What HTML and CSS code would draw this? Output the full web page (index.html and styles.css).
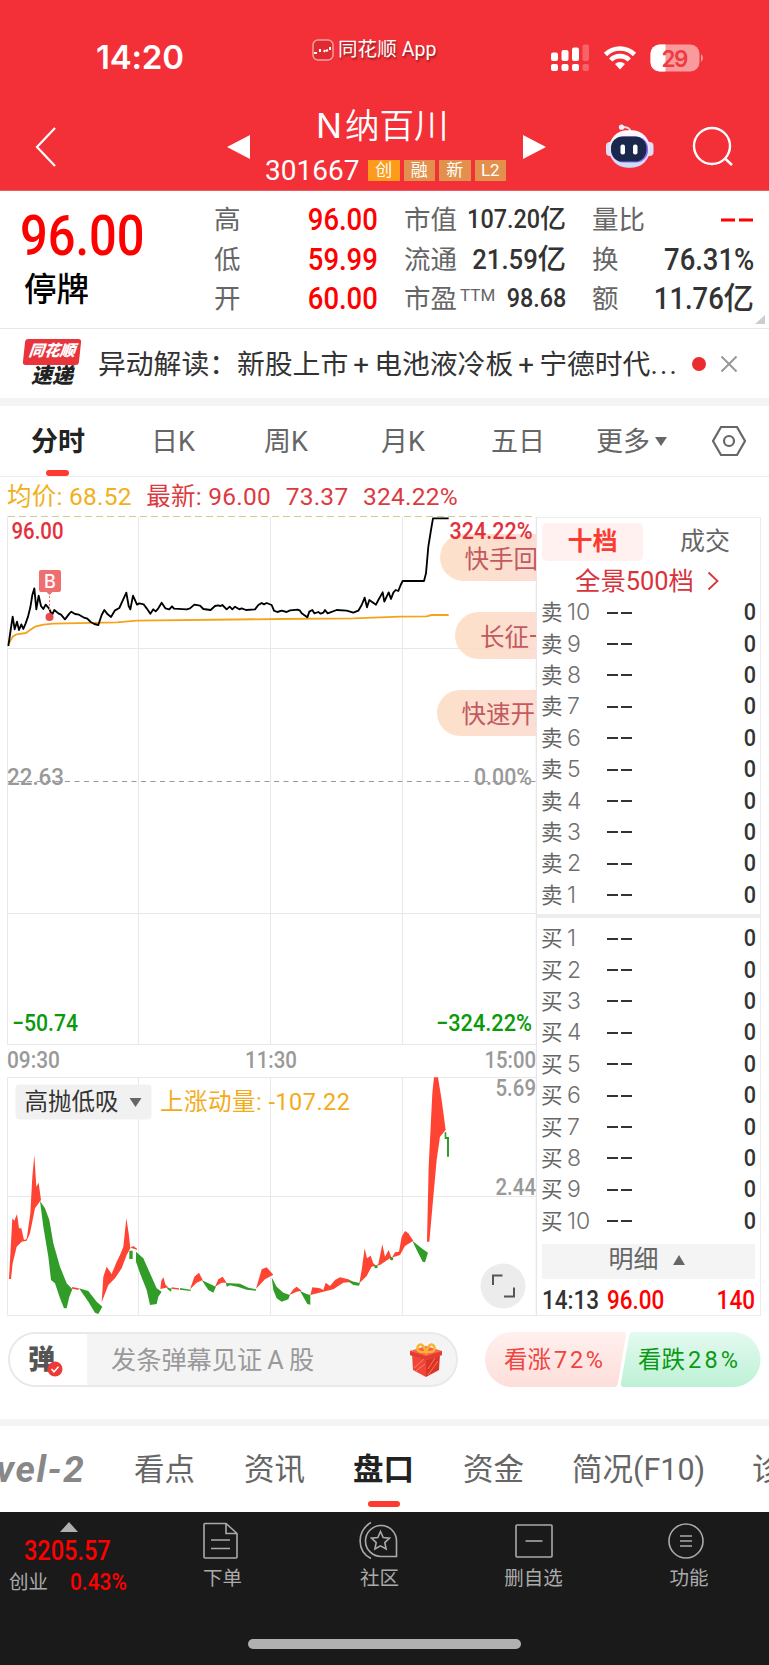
FILE: index.html
```html
<!DOCTYPE html>
<html lang="zh-CN">

<head>
  <meta charset="UTF-8">
  <title>N纳百川 301667</title>
  <link rel="stylesheet" href="styles.css">
</head>

<body>
  <header class="header">
    <div class="status-bar">
      <div class="clock">14:20</div>
      <div class="app-name">
        <svg width="22" height="22" viewBox="0 0 22 22">
          <rect x="1" y="1" width="20" height="20" rx="5" fill="#df2a31" stroke="#f5a0a0" stroke-width="1.500" />
          <path d="M2 14h3M8 10v3M12 13l1-2M14 12l2-1M18 8v3" stroke="#fff" stroke-width="2" fill="none" />
        </svg>
        <span>同花顺 App</span>
      </div>
      <svg class="status-icons" width="156" height="30" viewBox="0 0 156 30">
        <g fill="#fff">
          <rect x="2" y="21" width="7" height="7" rx="2" />
          <rect x="12.500" y="21" width="7" height="7" rx="2" />
          <rect x="23" y="21" width="7" height="7" rx="2" />
          <rect x="2" y="9.500" width="7" height="8.500" rx="2" />
          <rect x="12.500" y="7" width="7" height="11" rx="2" />
          <rect x="23" y="4.500" width="7" height="13.500" rx="2" />
          <g opacity=".25">
            <rect x="33.500" y="21" width="6.500" height="7" rx="2" />
            <rect x="33.500" y="1.500" width="6.500" height="16.500" rx="2" />
          </g>
        </g>
        <g fill="none" stroke="#fff" stroke-width="4.600">
          <path d="M56.500 11.500a20.500 20.500 0 0 1 29 0" />
          <path d="M61.700 17a13 13 0 0 1 18.600 0" />
        </g>
        <path d="M71 26.500l-5-5.500a7.500 7.500 0 0 1 10 0z" fill="#fff" />
        <rect x="101.500" y="1.500" width="49" height="27" rx="9" fill="#f99a9d" />
        <path d="M110.500 1.500h6v27h-6a9 9 0 0 1-9-9v-9a9 9 0 0 1 9-9z" fill="#fff" />
        <path d="M152 11q4 4 0 8z" fill="#f99a9d" />
        <text x="126" y="23.500" textLength="27" class="battery-text">29</text>
      </svg>
    </div>

    <div class="title-bar">
      <svg class="back" width="24" height="42" viewBox="0 0 24 42">
        <path d="M21 2L3 21l18 19" fill="none" stroke="#fff" stroke-width="2.200" />
      </svg>
      <svg class="prev" width="23" height="26" viewBox="0 0 23 26">
        <path d="M23 1v24L0 13z" fill="#fff" />
      </svg>
      <div class="title-box">
        <div class="stock-name">N<span>纳百川</span></div>
        <div class="stock-code">
          <span class="code">301667</span>
          <i class="badge badge-main">创</i><i class="badge">融</i><i class="badge">新</i><i class="badge">L2</i>
        </div>
      </div>
      <svg class="next" width="23" height="26" viewBox="0 0 23 26">
        <path d="M0 1v24l23-12z" fill="#fff" />
      </svg>
      <svg class="robot" width="50" height="46" viewBox="0 0 50 46">
        <defs>
          <linearGradient id="shell" x1="0" y1="0" x2="0" y2="1">
            <stop offset="0" stop-color="#fff" />
            <stop offset=".6" stop-color="#e4ddfb" />
            <stop offset="1" stop-color="#c8dcfa" />
          </linearGradient>
        </defs>
        <path d="M24 8V6q-1-3-8-3" fill="none" stroke="#e4e6f5" stroke-width="1.800" />
        <circle cx="15.500" cy="3.200" r="2.600" fill="#f0f0fa" />
        <rect x="0" y="18" width="8" height="14" rx="4" fill="#dbe0f7" />
        <rect x="39.500" y="18" width="8" height="14" rx="4" fill="#dbe0f7" />
        <rect x="3" y="6.200" width="41" height="37.500" rx="18.500" fill="url(#shell)" />
        <rect x="5.500" y="12.500" width="36.500" height="26" rx="12" fill="#8a6cf0" />
        <rect x="5" y="12.500" width="35.500" height="25" rx="11.500" fill="#1a294b" />
        <rect x="14.500" y="20.500" width="4.500" height="10" rx="2" fill="#fff" />
        <rect x="27" y="20.500" width="4.500" height="10" rx="2" fill="#fff" />
      </svg>
      <svg class="search" width="42" height="42" viewBox="0 0 42 42">
        <g fill="none" stroke="#fff" stroke-width="2.400">
          <circle cx="20" cy="20" r="18" />
          <path d="M33 32.500l7 6.500" />
        </g>
      </svg>
    </div>
  </header>

  <section class="quote">
    <div class="quote-main">
      <div class="price"><span class="num">96.00</span></div>
      <div class="state">停牌</div>
    </div>
    <div class="quote-grid">
      <span class="k">高</span><span class="v red"><b class="num">96.00</b></span>
      <span class="k">市值</span><span class="v small"><b class="num">107.20</b>亿</span>
      <span class="k">量比</span><span class="v red"><svg width="34" height="4"><path d="M1 2h14M19 2h14" stroke="#f00" stroke-width="3" /></svg></span>

      <span class="k">低</span><span class="v red"><b class="num">59.99</b></span>
      <span class="k">流通</span><span class="v mid"><b class="num">21.59</b>亿</span>
      <span class="k">换</span><span class="v"><b class="num">76.31%</b></span>

      <span class="k">开</span><span class="v red"><b class="num">60.00</b></span>
      <span class="k">市盈<sup>TTM</sup></span><span class="v small"><b class="num">98.68</b></span>
      <span class="k">额</span><span class="v"><b class="num">11.76</b>亿</span>
    </div>
    <i class="corner"></i>
  </section>

  <section class="news">
    <div class="news-logo">
      <div class="logo-top"><span>同花顺</span></div>
      <div class="logo-bottom">速递</div>
    </div>
    <div class="news-text">异动解读：新股上市<em>+</em>电池液冷板<em>+</em>宁德时代<b>...</b></div>
    <i class="news-dot"></i>
    <svg width="18" height="18" viewBox="0 0 18 18">
      <path d="M1.500 1.500l15 15M16.500 1.500l-15 15" stroke="#999" stroke-width="2" />
    </svg>
  </section>

  <nav class="chart-tabs">
    <span class="tab active">分时</span>
    <span class="tab">日K</span>
    <span class="tab">周K</span>
    <span class="tab">月K</span>
    <span class="tab">五日</span>
    <span class="tab more">更多<i></i></span>
    <svg width="34" height="32" viewBox="0 0 34 32">
      <g fill="none" stroke="#666" stroke-width="2.200">
        <path d="M9 2h16l8 14-8 14H9L1 16z" />
        <circle cx="17" cy="16" r="5" />
      </g>
    </svg>
  </nav>

  <div class="legend">
    <span class="avg">均价: 68.52</span>
    <span>最新: 96.00</span>
    <span>73.37</span>
    <span>324.22%</span>
  </div>

  <main class="market">
    <!-- price chart and indicator chart share one canvas -->
    <svg class="chart" width="537" height="806" viewBox="0 0 537 806">
      <defs>
        <clipPath id="plot"><rect x="8" y="0" width="528" height="806" /></clipPath>
        <linearGradient id="pill" x1="0" x2="1">
          <stop offset="0" stop-color="#fddcc2" />
          <stop offset="1" stop-color="#fbd8d2" />
        </linearGradient>
      </defs>

      <g class="grid-lines">
        <path d="M7.500 6.500V534.500H536.500M138.500 7V534M270.500 7V534M402.500 7V534M8 138.500H536M8 403.500H536" />
        <path d="M7.500 805.500V567.500H536M138.500 568V805M270.500 568V805M402.500 568V805M8 686.500H536M8 805.500H537" />
      </g>
      <path d="M536.500 7V806" stroke="#e6e6e6" stroke-width="1.500" />
      <path d="M8 6.500H536" stroke="#d9c98e" stroke-dasharray="7 4" />
      <path d="M8 271.500H536" stroke="#999" stroke-dasharray="5 4.500" />

      <text x="11.500" y="29" textLength="52" lengthAdjust="spacingAndGlyphs" class="axis up">96.00</text>
      <text x="7" y="275" textLength="57" lengthAdjust="spacingAndGlyphs" class="axis mute">22.63</text>
      <text x="474" y="275" textLength="58" lengthAdjust="spacingAndGlyphs" class="axis mute">0.00%</text>
      <text x="12" y="521" textLength="66" lengthAdjust="spacingAndGlyphs" class="axis down">−50.74</text>
      <text x="436" y="521" textLength="96" lengthAdjust="spacingAndGlyphs" class="axis down">−324.22%</text>
      <text x="7" y="558" textLength="53" lengthAdjust="spacingAndGlyphs" class="axis mute">09:30</text>
      <text x="245" y="558" textLength="52" lengthAdjust="spacingAndGlyphs" class="axis mute">11:30</text>
      <text x="484.500" y="558" textLength="51.500" lengthAdjust="spacingAndGlyphs" class="axis mute">15:00</text>

      <g clip-path="url(#plot)" class="barrage">
        <rect x="440" y="24" width="130" height="47" rx="23.500" />
        <rect x="455" y="102" width="130" height="47" rx="23.500" />
        <rect x="437" y="180" width="130" height="46" rx="23" />
        <text x="464.500" y="58">快手回</text>
        <text x="480" y="136">长征一</text>
        <text x="461.500" y="213">快速开户</text>
      </g>
      <text x="449.500" y="29" textLength="83" lengthAdjust="spacingAndGlyphs" class="axis up">324.22%</text>

      <g transform="translate(0 -10) scale(.33333)" fill="none" stroke-linejoin="round">
        <polyline stroke="#f5a31c" stroke-width="5.500" points="27,430 38,410 50,403 78,399 90,390 105,380 130,374 160,371 350,367 410,362 840,357 1060,355 1200,350 1280,349 1295,345 1346,345" />
        <polyline stroke="#000" stroke-width="5.500" points="25,438 32,390 38,350 44,388 51,365 57,390 64,373 70,387 77,370 84,350 91,322 97,285 103,265 109,328 116,287 123,318 130,327 137,314 147,325 156,345 163,330 175,340 183,344 195,358 208,341 214,335 225,342 237,344 250,352 262,356 272,366 283,372 295,375 305,345 313,330 323,343 333,351 345,331 358,324 368,302 379,278 386,318 391,328 399,287 411,314 418,310 431,313 440,325 451,341 460,328 467,334 475,325 485,308 496,325 508,328 516,319 522,326 560,328 570,325 583,314 600,317 610,327 632,330 645,318 654,316 662,318 667,315 680,328 689,320 697,328 705,320 718,328 725,325 738,330 765,328 775,315 785,309 792,313 800,309 815,315 822,332 832,336 845,332 860,336 870,331 893,329 900,332 905,340 922,352 928,335 937,330 943,340 955,336 962,341 970,338 975,330 983,340 1010,330 1040,332 1060,338 1075,332 1085,315 1094,293 1101,322 1108,300 1128,314 1135,300 1148,277 1153,305 1166,277 1173,297 1180,278 1187,270 1195,273 1202,255 1208,243 1272,243 1278,220 1285,140 1293,90 1299,55 1346,55" />
      </g>

      <g class="buy-mark">
        <path d="M41 60h18q2 0 2 2v18q0 2-2 2h-6.500l-3 3-3-3H41q-2 0-2-2V62q0-2 2-2z" />
        <path d="M49.500 86v18" stroke="#ef6e70" stroke-dasharray="2 2" />
        <circle cx="49.500" cy="107" r="4" fill="#e84a52" />
        <text x="50" y="77.500">B</text>
      </g>

      <g transform="translate(0 490) scale(.33333)">
        <g fill="#ff4433">
          <path d="M27 837L37 655l6 7 8-20 6 43h7l8 35 8-3 11-77 6-110 6-65 6 95 7-12 7 52-18 25-15 75-10 22-15 3-15 15-12 50-5 47z" />
          <path d="M216 861l20 4v5l-20-4z" />
          <path d="M305 907l5-77 10-30 15 22 15-37 10-20 10-25 9-85 7 45 5 45-11 20-15 40-20 30-20 20z" />
          <path d="M391 743l9-5 11 8v3z" />
          <path d="M481 867l3-25 6-10 7 23 8 7zM515 862l22 3v4l-22-3zM570 868l13-38 14-12 11 22-18 8zM645 860l10-22 13-8 12 18h-15zM768 866l17-58 15-6 20 22-25 14z" />
          <path d="M868 885l12-17 10-8 15 12-15 3zM931 885l6-23 23 3 10 5 7-22 13 10 15-18 15-8 25 6 15 7-30 3-30 20-30 7z" />
          <path d="M1078 850l7-40 9-65 7 30 11-8 8 23 8 7 7-5 12-59 8 37 11-20 9 25 10-18 12-2 8-45 10-17 10 7 15 22-25 16-15 27-30 10-30 20-25 5-15 28z" />
          <path d="M1281 725l5-225 6-120 5-100 5-48h12l11 68 12 90-17 20-10 70-10 110-12 135z" />
        </g>
        <g fill="#319d28">
          <path d="M120 603l15 22 13 35 12 70 20 70 20 50 17 18-9 22-8 35h-8l-12-30-15-45-12-10-8-70-15-90z" />
          <path d="M237 865l28 8 25 32 17 15-12 22-10-4-20-33z" />
          <path d="M388 752h10v25h-10zM408 755l22 20 20 45 20 45 15 10-10 15-5 22-20 3-10-45-20-50-12-35z" />
          <path d="M500 862l15 4-2 9-10-7zM540 864l32 5v4l-32-4zM605 840l20 10 23 10-8 18-15-8zM678 849l42 2 25 12 23 5v4l-28-3-25-8-25-5-10 4z" />
          <path d="M815 832l15 28 20 18 20 7-5 13-20 7-15-10-10-25zM900 873l20 9 11 3v29l-9-2zM1040 841l40 8-3 8-17-2z" />
          <circle cx="1128" cy="800" r="5" />
          <circle cx="1175" cy="776" r="5" />
          <path d="M1237 722l28 23 19 13-9 29-7-2-18-35zM1334 397h5v14h8v59h-6v-53h-7z" />
        </g>
      </g>

      <rect x="15.500" y="574.500" width="136" height="35" rx="4" fill="#f1f1f1" />
      <text x="24.500" y="600" class="selector">高抛低吸</text>
      <path d="M129.500 588h12l-6 9z" fill="#666" />
      <text x="160" y="600" textLength="190" class="momentum">上涨动量: -107.22</text>
      <text x="495.500" y="586" textLength="40.500" lengthAdjust="spacingAndGlyphs" class="axis mute">5.69</text>
      <text x="495.500" y="684.500" textLength="40.500" lengthAdjust="spacingAndGlyphs" class="axis mute">2.44</text>

      <circle cx="503" cy="776" r="22.500" fill="#ececec" />
      <path d="M493 775v-9.500h9.500M514 777.500v9h-10" fill="none" stroke="#555" stroke-width="2" />
    </svg>

    <aside class="book">
      <div class="book-tabs"><span class="on">十档</span><span>成交</span></div>
      <div class="book-link">全景500档
        <svg width="12" height="20" viewBox="0 0 12 20"><path d="M1.500 1.500l9 8.500-9 8.500" fill="none" stroke="#d9333a" stroke-width="1.800" /></svg>
      </div>
      <div class="levels" id="asks"></div>
      <div class="levels bids" id="bids"></div>
      <div class="detail"><span>明细</span><i></i></div>
      <div class="trade"><span class="num">14:13</span><span class="num red">96.00</span><span class="num red">140</span></div>
    </aside>
  </main>

  <section class="actions">
    <div class="danmu">
      <div class="danmu-switch"><span>弹</span>
        <svg width="16" height="16" viewBox="0 0 16 16">
          <circle cx="8" cy="8" r="7.500" fill="#ee3a36" />
          <path d="M4.500 8l2.500 2.800 4.500-5" fill="none" stroke="#fff" stroke-width="1.500" />
        </svg>
      </div>
      <span class="danmu-hint">发条弹幕见证 A 股</span>
      <svg width="34" height="36" viewBox="0 0 34 36">
        <path d="M3 12l14 5v18L4 28z" fill="#f0463a" />
        <path d="M31 12l-14 5v18l13-7z" fill="#dc3328" />
        <path d="M1 9l16-5 16 5v4l-16 5-16-5z" fill="#fa6350" />
        <path d="M1 9l16 5 16-5v4l-16 5-16-5z" fill="#e33c30" />
        <path d="M5 26l10-9M7 29l9-7M19 33l10-14M19 27l7-11" stroke="#ff8a68" stroke-width=".8" />
        <path d="M17 10Q6 11 9 4q4-5 8 6 4-11 8-6 3 7-8 6z" fill="none" stroke="#f6b62e" stroke-width="2.500" />
      </svg>
    </div>
    <svg width="277" height="55" viewBox="0 0 277 55">
      <defs>
        <linearGradient id="bull" x1="0" y1="0" x2="0" y2="1">
          <stop offset="0" stop-color="#fff0ee" />
          <stop offset="1" stop-color="#fddeda" />
        </linearGradient>
        <linearGradient id="bear" x1="0" y1="0" x2="0" y2="1">
          <stop offset="0" stop-color="#e4faf0" />
          <stop offset="1" stop-color="#bdf1d5" />
        </linearGradient>
      </defs>
      <path d="M27.500 0h111q3 0 2.500 3l-8 48q-.500 4-4 4H27.500a27.500 27.500 0 0 1 0-55z" fill="url(#bull)" />
      <path d="M149 0h99a27.500 27.500 0 0 1 0 55H139q-4 0-3-4l8-47q.500-4 5-4z" fill="url(#bear)" />
      <text x="19" y="35.500" class="bull">看涨<tspan dx="3" textLength="49">72%</tspan></text>
      <text x="153" y="35.500" class="bear">看跌<tspan dx="3" textLength="50">28%</tspan></text>
    </svg>
  </section>

  <nav class="info-tabs">
    <span class="level2">vel-2</span>
    <span>看点</span>
    <span>资讯</span>
    <span class="active">盘口</span>
    <span>资金</span>
    <span>简况(F10)</span>
    <span>诊</span>
  </nav>

  <footer class="bottom-nav">
    <div class="index-box">
      <i class="up-arrow"></i>
      <div class="index-value"><span class="num">3205.57</span></div>
      <div class="index-row"><span>创业</span><span class="num red">0.43%</span></div>
    </div>
    <div class="nav-item">
      <svg width="40" height="40" viewBox="0 0 40 40">
        <path d="M3 3.500h21l11 10V37q0 1-1 1H3q-1 0-1-1V4.500q0-1 1-1zM24 3.500v10h11M9 20h19M9 28.500h19" />
      </svg>
      <span>下单</span>
    </div>
    <div class="nav-item">
      <svg width="40" height="40" viewBox="0 0 40 40">
        <path d="M37.500 36.500H22.500a15.500 15.500 0 1 1 15-15zM12 2.500C-2.500 11-2.500 31 12 38.500" />
        <path d="M21.500 11.500l2.700 6 6.300.7-4.700 4.400 1.300 6.400-5.600-3.200-5.600 3.200 1.300-6.400-4.700-4.400 6.300-.7z" />
      </svg>
      <span>社区</span>
    </div>
    <div class="nav-item">
      <svg width="40" height="40" viewBox="0 0 40 40">
        <rect x="3" y="5" width="36" height="32" rx="1" />
        <path d="M12.500 21h17" />
      </svg>
      <span>删自选</span>
    </div>
    <div class="nav-item">
      <svg width="40" height="40" viewBox="0 0 40 40">
        <circle cx="18" cy="21" r="17" />
        <path d="M12 16h12M12 21h12M12 26h12" />
      </svg>
      <span>功能</span>
    </div>
    <i class="home-bar"></i>
  </footer>

  <script>
    function fillLevels(id, side, levels) {
      document.getElementById(id).innerHTML = levels.map(n =>
        `<div class="level"><span class="side">${side}</span><span class="no">${n}</span>` +
        `<span class="dash"></span><span class="num">0</span></div>`
      ).join("");
    }

    const levels = [1, 2, 3, 4, 5, 6, 7, 8, 9, 10];
    fillLevels("asks", "卖", [...levels].reverse());
    fillLevels("bids", "买", levels);
  </script>
</body>

</html>
```
FILE: styles.css
```css
* {
  box-sizing: border-box;
}

body {
  margin: 0;
  width: 769px;
  height: 1665px;
  overflow: hidden;
  background: #fff;
  color: #333;
  font-family: Roboto, "Noto Sans CJK SC", sans-serif;
}

svg {
  display: block;
  flex: none;
}

i,
em {
  font-style: normal;
}

.num {
  display: inline-block;
  font-family: Roboto, sans-serif;
  font-weight: 500;
  transform: scaleX(0.9);
  transform-origin: right center;
}

.red {
  color: #f00;
}

/* --- Header --- */
.header {
  height: 191px;
  background: #f33037;
  color: #fff;
  border-bottom: 1px solid #e7616b;
}

.status-bar {
  height: 100px;
  display: flex;
  align-items: flex-start;
}

.clock {
  width: 216px;
  margin: 37px 0 0 96px;
  font: 600 33px/40px Inter, sans-serif;
  letter-spacing: -0.2px;
}

.app-name {
  width: 237px;
  margin-top: 36px;
  display: flex;
  align-items: center;
  gap: 4px;
  font-size: 19.5px;
  line-height: 27px;
  letter-spacing: 0.1px;
  text-shadow: 1px 2px 2px rgba(0, 0, 0, 0.4);
}

.status-icons {
  margin-top: 42.5px;
}

.battery-text {
  font: 600 22.5px Inter, sans-serif;
  fill: #ee3a40;
  text-anchor: middle;
}

.title-bar {
  display: flex;
  align-items: flex-start;
}

.back {
  margin: 26px 0 0 34px;
}

.prev {
  margin: 34px 0 0 169px;
}

.title-box {
  width: 246px;
  margin: 4px 13px 0 14px;
}

.stock-name {
  padding-left: 52px;
  font: 400 34.5px/44px Inter, "Noto Sans CJK SC", sans-serif;
}

.stock-name span {
  margin-left: 3px;
  font-weight: 350;
}

.stock-code {
  display: flex;
  align-items: center;
  height: 44px;
  gap: 4px;
  padding-left: 1px;
}

.code {
  width: 99px;
  font-size: 28px;
}

.badge {
  width: 31.5px;
  height: 21px;
  background: #e2904b;
  font-size: 17px;
  line-height: 20px;
  text-align: center;
}

.badge-main {
  background: #fd9b1b;
}

.next {
  margin-top: 34px;
}

.robot {
  margin: 24px 0 0 60px;
}

.search {
  margin: 26px 0 0 36px;
}

/* --- Quote --- */
.quote {
  position: relative;
  height: 138px;
  display: flex;
  border-bottom: 1px solid #e8e8e8;
}

.quote-main {
  flex: none;
  width: 214px;
  padding-left: 20px;
}

.price {
  height: 77px;
  font-size: 55.5px;
  line-height: 92px;
  color: #f00;
}

.price .num {
  transform: scaleX(0.88);
  transform-origin: left center;
}

.state {
  padding-left: 4px;
  font-size: 32.5px;
  line-height: 44px;
  font-weight: 500;
  color: #000;
}

.quote-grid {
  height: 119px;
  margin-top: 9px;
  display: grid;
  grid-template-columns: 60px 130px 62px 126px 52px 110px;
  grid-template-rows: repeat(3, 39.5px);
  align-items: center;
  white-space: nowrap;
}

.k {
  font-size: 26.5px;
  line-height: 39px;
  color: #666;
}

.k sup {
  font: 17px/1 Roboto, sans-serif;
  vertical-align: 7px;
  margin-left: 3px;
}

.v {
  font-size: 30.5px;
  line-height: 39px;
  display: flex;
  justify-content: flex-end;
  align-items: center;
  font-weight: 500;
}

.v:nth-child(6n + 2) {
  padding-right: 26px;
}

.v:nth-child(6n + 4) {
  padding-right: 26px;
}

.v.small {
  font-size: 26px;
}

.v.mid {
  font-size: 28.5px;
}

.corner {
  position: absolute;
  right: 4px;
  bottom: 4px;
  border-left: 10px solid transparent;
  border-bottom: 9px solid #ccc;
}

/* --- News --- */
.news {
  height: 77px;
  padding: 0 0 0 24px;
  border-bottom: 8px solid #f4f4f4;
  display: flex;
  align-items: center;
}

.news-logo {
  width: 56px;
  height: 49px;
  margin-right: 18px;
  text-align: center;
  font-style: italic;
  font-weight: 900;
}

.logo-top {
  height: 26px;
  background: #e9343b;
  border-radius: 3px;
  transform: skewX(-6deg);
  color: #fff;
  font-size: 15.5px;
  line-height: 25px;
}

.logo-bottom {
  font-size: 21px;
  line-height: 22px;
  color: #222;
}

.news-text {
  width: 595px;
  padding-bottom: 4px;
  font-size: 27.8px;
  white-space: nowrap;
}

.news-text em {
  display: inline-block;
  width: 26px;
  text-align: center;
}

.news-text b {
  font-weight: 400;
  letter-spacing: 2.2px;
}

.news-dot {
  width: 14px;
  height: 14px;
  margin: 0 14px 0 -1px;
  border-radius: 50%;
  background: #ea2c30;
}

/* --- Chart tabs --- */
.chart-tabs {
  height: 71px;
  padding-left: 30px;
  border-bottom: 1px solid #ececec;
  display: grid;
  grid-template-columns: 121px 113px 117px 110px 105px 116px 34px;
  align-items: center;
  font-size: 27px;
  line-height: 70px;
  color: #666;
}

.tab {
  height: 70px;
  padding-top: 1px;
}

.tab.active {
  padding-left: 1px;
  color: #222;
  font-weight: 700;
}

.tab.active::after {
  content: "";
  display: block;
  width: 23px;
  height: 6px;
  margin: -7px 0 0 15px;
  border-radius: 3px;
  background: #ff3a30;
}

.more i {
  display: inline-block;
  margin: 0 0 5px 5px;
  border: 6px solid transparent;
  border-top: 9px solid #666;
  border-bottom: 0;
}

.legend {
  height: 33px;
  padding-left: 7px;
  display: flex;
  gap: 14.5px;
  font-size: 24.5px;
  line-height: 40px;
  letter-spacing: 0.25px;
  color: #dc3a40;
}

.legend .avg {
  color: #f0b020;
}

/* --- Market --- */
.market {
  height: 806px;
  display: flex;
}

.grid-lines path {
  fill: none;
  stroke: #e8e8e8;
}

.axis {
  font: 500 23px Roboto, sans-serif;
}

.up {
  fill: #e3303a;
}

.down {
  fill: #0a9a0a;
}

.mute {
  fill: #999;
}

.barrage {
  font-size: 24.5px;
}

.barrage rect {
  fill: url(#pill);
  fill-opacity: 0.88;
}

.barrage text {
  fill: #c25a60;
}

.buy-mark path {
  fill: #ef6e70;
}

.buy-mark text {
  font: 500 18px Inter, sans-serif;
  fill: #fff;
  text-anchor: middle;
}

.selector,
.momentum {
  font-size: 23.5px;
  fill: #333;
}

.momentum {
  fill: #f4ab1a;
}

.book {
  width: 224px;
  margin-top: 7px;
  padding: 5px 5px 0 5px;
  border: solid #ececec;
  border-width: 1px 1px 1px 0;
}

.book-tabs {
  display: flex;
  height: 38px;
  font-size: 25px;
  line-height: 37px;
  text-align: center;
  color: #666;
}

.book-tabs span {
  flex: 1;
  padding-left: 12px;
}

.book-tabs .on {
  flex: none;
  width: 101px;
  padding: 0;
  background: #fff1f0;
  border-radius: 5px;
  color: #fb3b30;
  font-weight: 700;
}

.book-link {
  height: 36px;
  padding: 4px 0 0 33px;
  display: flex;
  align-items: center;
  gap: 13px;
  font-size: 25.4px;
  line-height: 36px;
  color: #d9333a;
}

.levels {
  height: 317px;
}

.bids {
  margin: 0 -5px;
  padding: 5px 5px 0;
  border-top: 4px solid #ededed;
  height: 330px;
}

.level {
  height: 31.4px;
  display: grid;
  grid-template-columns: 25px 40px 25px 1fr;
  align-items: center;
  font-size: 24px;
  line-height: 31px;
}

.side {
  margin-left: -1px;
  font-size: 21.5px;
  color: #666;
}

.no {
  color: #707070;
  font-family: Inter, sans-serif;
  font-size: 23px;
  font-weight: 350;
}

.dash {
  height: 2px;
  background: linear-gradient(90deg, #333 11px, transparent 11px 14px, #333 14px);
}

.level .num {
  text-align: right;
  transform: translateX(1px) scaleX(0.9);
}

.detail {
  height: 35px;
  display: flex;
  align-items: center;
  justify-content: center;
  gap: 14px;
  padding: 0 4px 3px 0;
  background: #f4f4f4;
  font-size: 25px;
  line-height: 32px;
  color: #666;
}

.detail i {
  border: 6.5px solid transparent;
  border-bottom: 10px solid #666;
  border-top: 0;
}

.trade {
  display: grid;
  grid-template-columns: 65px 65px 1fr;
  font-size: 25px;
  line-height: 43px;
}

.trade .num {
  transform-origin: left center;
}

.trade .num:last-child {
  text-align: right;
  transform-origin: right center;
}

/* --- Barrage input and votes --- */
.actions {
  height: 110px;
  padding: 16px 0 0 8px;
  border-bottom: 7px solid #f4f4f4;
  display: flex;
}

.danmu {
  width: 450px;
  height: 55px;
  margin-right: 27px;
  padding-right: 13px;
  display: flex;
  align-items: center;
  border: 2px solid #e9e9e9;
  border-radius: 28px;
  background: #f4f4f4;
  overflow: hidden;
}

.danmu-switch {
  width: 77px;
  height: 51px;
  padding-left: 18px;
  display: flex;
  align-items: center;
  background: #fff;
  font-size: 27px;
  font-weight: 900;
  color: #555;
}

.danmu-switch span {
  padding-bottom: 5px;
}

.danmu-switch svg {
  margin: 18px 0 0 -8px;
}

.danmu-hint {
  flex: 1;
  padding: 0 0 4px 24px;
  font-size: 25.2px;
  word-spacing: -1px;
  color: #999;
}

.bull,
.bear {
  font-size: 23.5px;
  fill: #f0443e;
}

.bear {
  fill: #0c9a16;
}

/* --- Info tabs --- */
.info-tabs {
  height: 86px;
  display: grid;
  grid-template-columns: 134px 110px 109px 110px 109px 180px 60px;
  font-size: 30.5px;
  line-height: 88px;
  color: #666;
  white-space: nowrap;
}

.info-tabs .level2 {
  font: italic 700 37px/88px Roboto, sans-serif;
  margin-left: -4px;
  letter-spacing: 1.6px;
  color: #888;
}

.info-tabs .active {
  color: #222;
  font-weight: 700;
}

.info-tabs .active::after {
  content: "";
  display: block;
  width: 32px;
  height: 6px;
  margin: -13px 0 0 15px;
  border-radius: 3px;
  background: #fb3b30;
}

/* --- Bottom nav --- */
.bottom-nav {
  position: relative;
  height: 153px;
  background: #1a1a1a;
  color: #aaa;
  display: grid;
  grid-template-columns: 144px 155px 159px 149px 162px;
}

.index-box {
  padding: 10px 0 0 9px;
}

.up-arrow {
  display: block;
  width: 0;
  margin-left: 51px;
  border: 9px solid transparent;
  border-bottom: 10px solid #b0b0b0;
  border-top: 0;
}

.index-value {
  padding-left: 15px;
  font-size: 27px;
  line-height: 39px;
  color: #f00;
}

.index-box .num {
  transform: scaleX(0.87);
  transform-origin: left center;
}

.index-row {
  display: flex;
  gap: 22px;
  font-size: 19.5px;
  line-height: 23px;
}

.index-row .num {
  font-size: 24px;
}

.nav-item {
  display: flex;
  flex-direction: column;
  align-items: center;
  gap: 6px;
  padding-top: 8px;
  font-size: 19.5px;
  line-height: 25px;
}

.nav-item span {
  padding-left: 2px;
}

.nav-item svg path,
.nav-item svg rect,
.nav-item svg circle {
  fill: none;
  stroke: #aaa;
  stroke-width: 1.6;
}

.home-bar {
  position: absolute;
  left: 248px;
  bottom: 16px;
  width: 273px;
  height: 10px;
  border-radius: 5px;
  background: #b0b0b0;
}
```
